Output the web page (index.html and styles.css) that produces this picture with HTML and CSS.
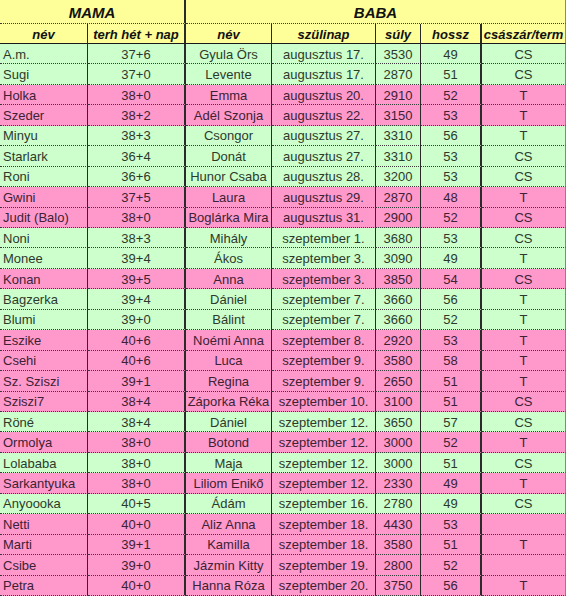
FILE: index.html
```html
<!DOCTYPE html>
<html lang="hu">
<head>
<meta charset="utf-8">
<title>MAMA – BABA</title>
<link rel="stylesheet" href="styles.css">
</head>
<body>
<div class="sheet">
  <div class="c h1 thick">MAMA</div>
  <div class="c h1 span5">BABA</div>

  <div class="c h2">név</div>
  <div class="c h2 thick">terh hét + nap</div>
  <div class="c h2">név</div>
  <div class="c h2">szülinap</div>
  <div class="c h2">súly</div>
  <div class="c h2 thick">hossz</div>
  <div class="c h2 last">császár/term</div>

  <div class="c g l">A.m.</div><div class="c g thick">37+6</div><div class="c g">Gyula Örs</div><div class="c g">augusztus 17.</div><div class="c g">3530</div><div class="c g thick">49</div><div class="c g last">CS</div>
  <div class="c g l">Sugi</div><div class="c g thick">37+0</div><div class="c g">Levente</div><div class="c g">augusztus 17.</div><div class="c g">2870</div><div class="c g thick">51</div><div class="c g last">CS</div>
  <div class="c p l">Holka</div><div class="c p thick">38+0</div><div class="c p">Emma</div><div class="c p">augusztus 20.</div><div class="c p">2910</div><div class="c p thick">52</div><div class="c p last">T</div>
  <div class="c p l">Szeder</div><div class="c p thick">38+2</div><div class="c p">Adél Szonja</div><div class="c p">augusztus 22.</div><div class="c p">3150</div><div class="c p thick">53</div><div class="c p last">T</div>
  <div class="c g l">Minyu</div><div class="c g thick">38+3</div><div class="c g">Csongor</div><div class="c g">augusztus 27.</div><div class="c g">3310</div><div class="c g thick">56</div><div class="c g last">T</div>
  <div class="c g l">Starlark</div><div class="c g thick">36+4</div><div class="c g">Donát</div><div class="c g">augusztus 27.</div><div class="c g">3310</div><div class="c g thick">53</div><div class="c g last">CS</div>
  <div class="c g l">Roni</div><div class="c g thick">36+6</div><div class="c g">Hunor Csaba</div><div class="c g">augusztus 28.</div><div class="c g">3200</div><div class="c g thick">53</div><div class="c g last">CS</div>
  <div class="c p l">Gwini</div><div class="c p thick">37+5</div><div class="c p">Laura</div><div class="c p">augusztus 29.</div><div class="c p">2870</div><div class="c p thick">48</div><div class="c p last">T</div>
  <div class="c p l">Judit (Balo)</div><div class="c p thick">38+0</div><div class="c p">Boglárka Mira</div><div class="c p">augusztus 31.</div><div class="c p">2900</div><div class="c p thick">52</div><div class="c p last">CS</div>
  <div class="c g l">Noni</div><div class="c g thick">38+3</div><div class="c g">Mihály</div><div class="c g">szeptember 1.</div><div class="c g">3680</div><div class="c g thick">53</div><div class="c g last">CS</div>
  <div class="c g l">Monee</div><div class="c g thick">39+4</div><div class="c g">Ákos</div><div class="c g">szeptember 3.</div><div class="c g">3090</div><div class="c g thick">49</div><div class="c g last">T</div>
  <div class="c p l">Konan</div><div class="c p thick">39+5</div><div class="c p">Anna</div><div class="c p">szeptember 3.</div><div class="c p">3850</div><div class="c p thick">54</div><div class="c p last">CS</div>
  <div class="c g l">Bagzerka</div><div class="c g thick">39+4</div><div class="c g">Dániel</div><div class="c g">szeptember 7.</div><div class="c g">3660</div><div class="c g thick">56</div><div class="c g last">T</div>
  <div class="c g l">Blumi</div><div class="c g thick">39+0</div><div class="c g">Bálint</div><div class="c g">szeptember 7.</div><div class="c g">3660</div><div class="c g thick">52</div><div class="c g last">T</div>
  <div class="c p l">Eszike</div><div class="c p thick">40+6</div><div class="c p">Noémi Anna</div><div class="c p">szeptember 8.</div><div class="c p">2920</div><div class="c p thick">53</div><div class="c p last">T</div>
  <div class="c p l">Csehi</div><div class="c p thick">40+6</div><div class="c p">Luca</div><div class="c p">szeptember 9.</div><div class="c p">3580</div><div class="c p thick">58</div><div class="c p last">T</div>
  <div class="c p l">Sz. Sziszi</div><div class="c p thick">39+1</div><div class="c p">Regina</div><div class="c p">szeptember 9.</div><div class="c p">2650</div><div class="c p thick">51</div><div class="c p last">T</div>
  <div class="c p l">Sziszi7</div><div class="c p thick">38+4</div><div class="c p">Záporka Réka</div><div class="c p">szeptember 10.</div><div class="c p">3100</div><div class="c p thick">51</div><div class="c p last">CS</div>
  <div class="c g l">Röné</div><div class="c g thick">38+4</div><div class="c g">Dániel</div><div class="c g">szeptember 12.</div><div class="c g">3650</div><div class="c g thick">57</div><div class="c g last">CS</div>
  <div class="c p l">Ormolya</div><div class="c p thick">38+0</div><div class="c p">Botond</div><div class="c p">szeptember 12.</div><div class="c p">3000</div><div class="c p thick">52</div><div class="c p last">T</div>
  <div class="c g l">Lolababa</div><div class="c g thick">38+0</div><div class="c g">Maja</div><div class="c g">szeptember 12.</div><div class="c g">3000</div><div class="c g thick">51</div><div class="c g last">CS</div>
  <div class="c p l">Sarkantyuka</div><div class="c p thick">38+0</div><div class="c p">Liliom Enikő</div><div class="c p">szeptember 12.</div><div class="c p">2330</div><div class="c p thick">49</div><div class="c p last">T</div>
  <div class="c g l">Anyoooka</div><div class="c g thick">40+5</div><div class="c g">Ádám</div><div class="c g">szeptember 16.</div><div class="c g">2780</div><div class="c g thick">49</div><div class="c g last">CS</div>
  <div class="c p l">Netti</div><div class="c p thick">40+0</div><div class="c p">Aliz Anna</div><div class="c p">szeptember 18.</div><div class="c p">4430</div><div class="c p thick">53</div><div class="c p last"></div>
  <div class="c p l">Marti</div><div class="c p thick">39+1</div><div class="c p">Kamilla</div><div class="c p">szeptember 18.</div><div class="c p">3580</div><div class="c p thick">51</div><div class="c p last">T</div>
  <div class="c p l">Csibe</div><div class="c p thick">39+0</div><div class="c p">Jázmin Kitty</div><div class="c p">szeptember 19.</div><div class="c p">2800</div><div class="c p thick">52</div><div class="c p last"></div>
  <div class="c p l">Petra</div><div class="c p thick">40+0</div><div class="c p">Hanna Róza</div><div class="c p">szeptember 20.</div><div class="c p">3750</div><div class="c p thick">56</div><div class="c p last">T</div>
</div>
</body>
</html>
```

FILE: styles.css
```css
html, body {
  margin: 0;
  padding: 0;
  background: #ffffff;
}

.sheet {
  display: grid;
  width: 566px;
  height: 596px;
  grid-template-columns: 88px 98px 86px 104px 45px 61px 84px;
  grid-template-rows: 24px 20px repeat(27, 1fr);
  font-family: "Liberation Sans", Arial, sans-serif;
  font-size: 13px;
  color: #2a2a2a;
}

.c {
  box-sizing: border-box;
  display: flex;
  align-items: center;
  justify-content: center;
  white-space: nowrap;
  overflow: hidden;
  border-right: 1px solid #2a2a2a;
  border-bottom: 1px dotted #3a3a3a;
  padding: 1px 0 0 0;
}

.c.thick {
  border-right-width: 2px;
}

.c.last {
  border-right: 1px solid #8a8a70;
}

.c.l {
  justify-content: flex-start;
  padding-left: 3px;
}

.h1 {
  background: #ffff99;
  font-weight: bold;
  font-style: italic;
  font-size: 15px;
  color: #111;
  grid-column: span 2;
  border-bottom: 1px dotted #3a3a3a;
}

.h1.span5 {
  grid-column: span 5;
  border-right: 1px solid #8a8a70;
}

.h2 {
  background: #ffff99;
  font-weight: bold;
  font-style: italic;
  color: #111;
  border-bottom: 1px solid #1a1a1a;
}

.g {
  background: #ccffcc;
  color: #2c3a2c;
}

.p {
  background: #ff99cc;
  color: #3c2234;
}
```
